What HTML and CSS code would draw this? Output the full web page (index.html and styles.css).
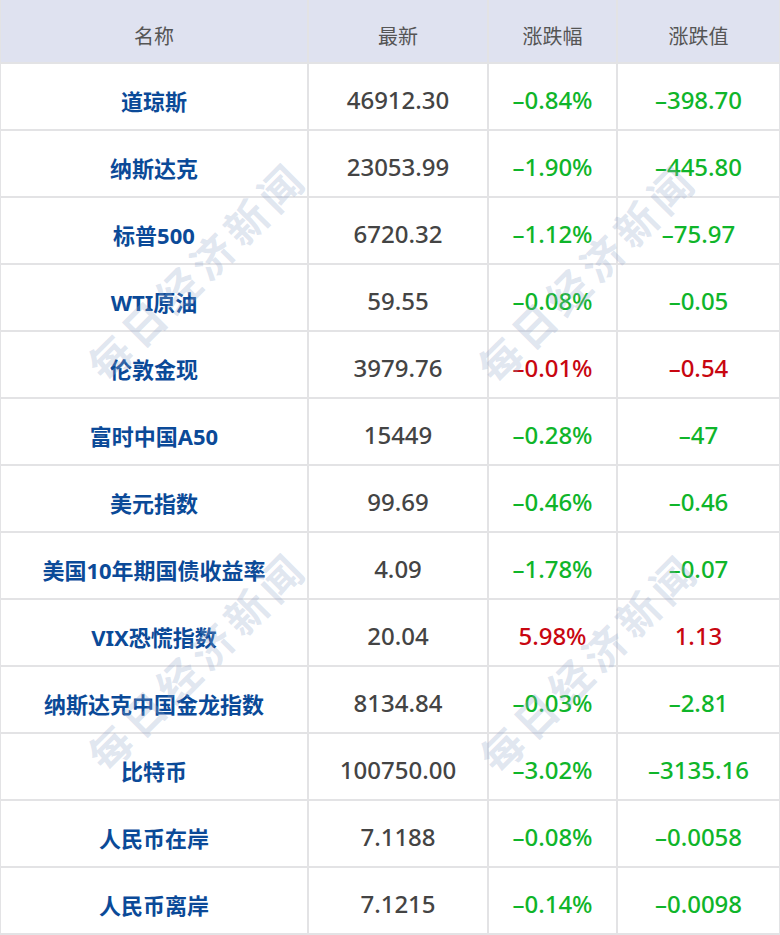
FILE: index.html
```html
<!DOCTYPE html>
<html lang="zh-CN">
<head>
<meta charset="utf-8">
<title>全球市场</title>
<link rel="stylesheet" href="styles.css">
</head>
<body>
<div class="board">
  <div class="grid">
    <div class="cell head">名称</div>
    <div class="cell head">最新</div>
    <div class="cell head">涨跌幅</div>
    <div class="cell head">涨跌值</div>

    <div class="cell name">道琼斯</div><div class="cell num">46912.30</div><div class="cell down">–0.84%</div><div class="cell down">–398.70</div>
    <div class="cell name">纳斯达克</div><div class="cell num">23053.99</div><div class="cell down">–1.90%</div><div class="cell down">–445.80</div>
    <div class="cell name">标普500</div><div class="cell num">6720.32</div><div class="cell down">–1.12%</div><div class="cell down">–75.97</div>
    <div class="cell name">WTI原油</div><div class="cell num">59.55</div><div class="cell down">–0.08%</div><div class="cell down">–0.05</div>
    <div class="cell name">伦敦金现</div><div class="cell num">3979.76</div><div class="cell up">–0.01%</div><div class="cell up">–0.54</div>
    <div class="cell name">富时中国A50</div><div class="cell num">15449</div><div class="cell down">–0.28%</div><div class="cell down">–47</div>
    <div class="cell name">美元指数</div><div class="cell num">99.69</div><div class="cell down">–0.46%</div><div class="cell down">–0.46</div>
    <div class="cell name">美国10年期国债收益率</div><div class="cell num">4.09</div><div class="cell down">–1.78%</div><div class="cell down">–0.07</div>
    <div class="cell name">VIX恐慌指数</div><div class="cell num">20.04</div><div class="cell up">5.98%</div><div class="cell up">1.13</div>
    <div class="cell name">纳斯达克中国金龙指数</div><div class="cell num">8134.84</div><div class="cell down">–0.03%</div><div class="cell down">–2.81</div>
    <div class="cell name">比特币</div><div class="cell num">100750.00</div><div class="cell down">–3.02%</div><div class="cell down">–3135.16</div>
    <div class="cell name">人民币在岸</div><div class="cell num">7.1188</div><div class="cell down">–0.08%</div><div class="cell down">–0.0058</div>
    <div class="cell name">人民币离岸</div><div class="cell num">7.1215</div><div class="cell down">–0.14%</div><div class="cell down">–0.0098</div>
  </div>
  <div class="mark mark-a">每日经济新闻</div>
  <div class="mark mark-b">每日经济新闻</div>
  <div class="mark mark-c">每日经济新闻</div>
  <div class="mark mark-d">每日经济新闻</div>
</div>
</body>
</html>
```
FILE: styles.css
```css
html, body {
  margin: 0;
  padding: 0;
  background: #ffffff;
}
body {
  font-family: "Noto Sans", "Noto Sans CJK SC", sans-serif;
}
.board {
  position: relative;
  width: 780px;
  height: 935px;
  overflow: hidden;
}
.grid {
  display: grid;
  grid-template-columns: 306px 178px 127px 161px;
  grid-template-rows: 62px repeat(13, 65px);
  gap: 2px;
  padding: 0 1px 2px 1px;
  background: #e3e3e5;
}
.cell {
  display: flex;
  align-items: center;
  justify-content: center;
  padding-top: 6px;
  box-sizing: border-box;
  background: #ffffff;
  font-size: 24px;
  white-space: nowrap;
}
.head {
  padding-top: 8px;
  background: #dfe2f0;
  color: #555555;
  font-size: 20px;
  font-family: "Noto Sans CJK SC", sans-serif;
  font-weight: 400;
}
.name {
  font-size: 22px;
  color: #0b4a98;
  font-weight: 700;
  font-family: "Noto Sans", "Noto Sans CJK SC", sans-serif;
}
.num {
  color: #444444;
  font-weight: 500;
}
.down {
  color: #0fb52a;
  font-weight: 500;
}
.up {
  color: #c80610;
  font-weight: 500;
}
.mark {
  position: absolute;
  width: 340px;
  margin-left: -170px;
  margin-top: -26px;
  text-align: center;
  font-family: "Noto Sans CJK SC", sans-serif;
  font-weight: 700;
  font-size: 42px;
  line-height: 52px;
  letter-spacing: 6px;
  color: rgba(150, 170, 205, 0.3);
  transform: rotate(-45deg);
  pointer-events: none;
}
.mark-a { left: 196px; top: 270px; }
.mark-b { left: 586px; top: 272px; }
.mark-c { left: 196px; top: 660px; }
.mark-d { left: 588px; top: 662px; }
```
